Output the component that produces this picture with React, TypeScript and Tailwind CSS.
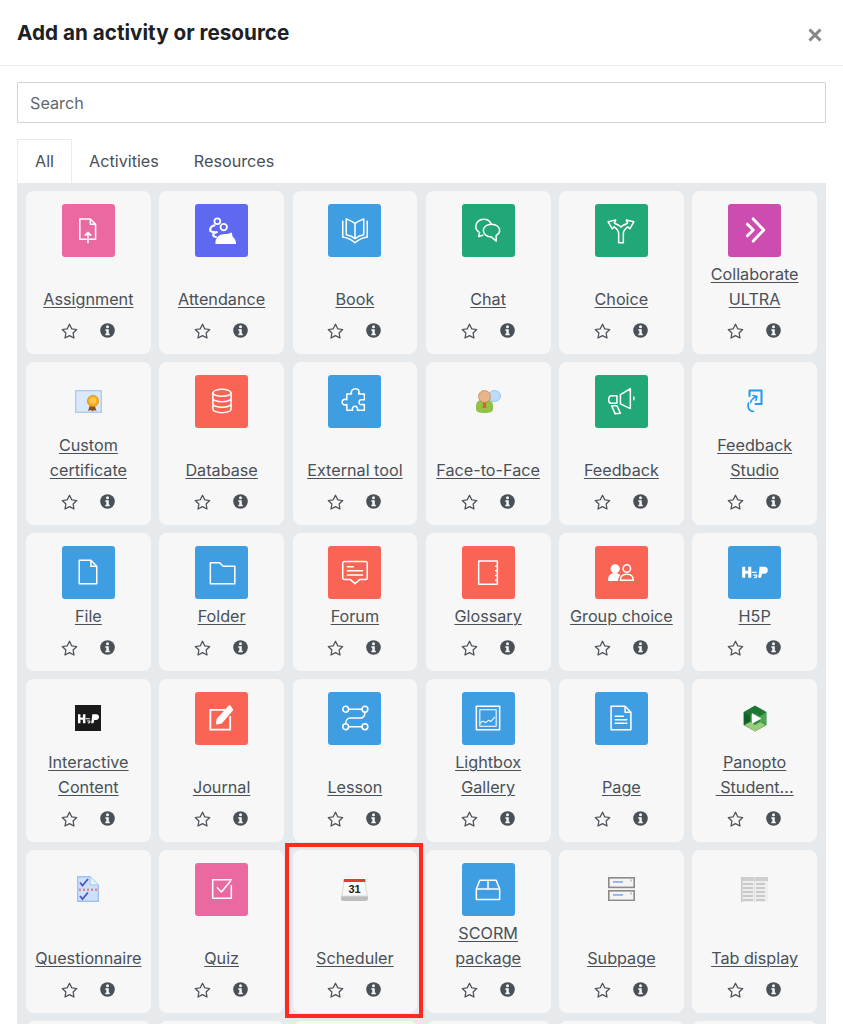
import React from "react";

const W = "#ffffff";
const S = ({ children }: { children: React.ReactNode }) => (
  <svg viewBox="0 0 24 24" width="28" height="28" fill="none" stroke={W} strokeWidth="1.3" strokeLinejoin="round" strokeLinecap="round">{children}</svg>
);

const H5pMark = () => (
  <>
    <path d="M1 7.500h2.600v3.400h2.600V7.500h2.600V17H6.200v-3.600H3.600V17H1z" fill={W} stroke="none" />
    <path d="M16 7.500h4c2 0 3 1.300 3 3s-1.300 3-3 3h-2l-.8 3.500h-2.400z" fill={W} stroke="none" />
    <path d="M9.500 12.300h3.500M11 14.700h2.300c.5.600 0 2-1.500 2" strokeWidth="1.100" />
  </>
);

const glyphs: Record<string, React.ReactNode> = {
  assignment: <S><path d="M5 2.500h9l4.500 4.500v13H13.500M10.500 20H5V2.500M14 2.500V7h4.500" /><path d="M12 23v-9M9.500 16.500L12 14l2.500 2.500" fill={W} /></S>,
  attendance: (
    <S>
      <circle cx="8" cy="4.500" r="2.500" strokeWidth="1.500" />
      <circle cx="13.500" cy="9.500" r="2.800" strokeWidth="1.500" />
      <path d="M5.500 8C3 8.300 1.500 10.300 2 12.800c1.500 1 3.500 1.400 5.500 1M6 14.500c-2.300.5-2.300 3 .8 3.500" strokeWidth="1.800" />
      <path d="M7 23.500c0-4.500 2.800-7.500 7-7.500h1.500c1.800 0 3.200-.5 4.300-1.200l.7 3.200c1.500 1 2.500 3 3 5.500z" fill={W} />
    </S>
  ),
  book: <S><path d="M12 6.500C10 4.500 7 3.500 4.500 2.500V16c3 .5 5.500 1.500 7.500 3.500 2-2 4.500-3 7.500-3.500V2.500C17 3.500 14 4.500 12 6.500zM12 6.500v13" /><path d="M1.500 4.500v13.500c4.500.8 8 2.500 10.500 5 2.500-2.500 6-4.200 10.500-5V4.500" /></S>,
  chat: <S><path d="M7.500 16.500l-3.500 1 .8-3.300C2.800 13 1.500 11.200 1.500 9c0-3.500 3-6.200 6.700-6.200 3 0 5.600 1.700 6.500 4.200" /><path d="M15 7c-4 0-7 2.400-7 5.500s3 5.500 7 5.500l4 3.500v-4.800c1.800-1 3-2.500 3-4.200C22 9.400 19 7 15 7z" /></S>,
  choice: <S><path d="M10 23h4v-8c0-2.500 1.500-4 3.800-5.700l1.700 1.700L23 5l-6.500-1.500 1.200 2.700c-2.500 1-4.700 1.800-5.700 3.300-1-1.500-3.200-2.300-5.700-3.300L7.500 3.500 1 5l3.500 6 1.700-1.700C8.500 11 10 12.500 10 15z" /></S>,
  collab: <S><path d="M10.500 2.500L19.500 12l-9 9.500M5.500 7l5 5-5 5" strokeWidth="2.500" /></S>,
  database: <S><ellipse cx="12" cy="5" rx="7.800" ry="3" /><path d="M4.200 5v14c0 1.700 3.500 3 7.800 3s7.800-1.300 7.800-3V5M4.200 9.700c0 1.700 3.500 3 7.800 3s7.800-1.300 7.800-3M4.200 14.400c0 1.700 3.500 3 7.800 3s7.800-1.300 7.800-3" /></S>,
  puzzle: <S><path d="M9 6H5v5c-3-1.500-4 1-4 2s1 3.500 4 2v5h5c-1-2.500 1-3.500 2-3.500s3 1 2 3.500h6v-5h-2c-1.500.5-2.500-.5-2.500-2s1-2.500 2.500-2h2V6h-5c1.500-3-.5-4.500-2.500-4.500S8 3 9 6z" /></S>,
  megaphone: <S><path d="M11.500 6.500L20 1.500v17l-8.500-4zM23 8.500V11M8.500 7.500H4A2.500 2.500 0 0 0 1.500 10v1.500A2.500 2.500 0 0 0 4 14h4.500zM4 16h4.500l3 6.500-4.500.5z" /></S>,
  file: <S><path d="M4.500 2h10l5 5v15h-15zM14.500 2v5h5" /></S>,
  folder: <S><path d="M2 4h8l3 3h10v15H2z" /></S>,
  forum: <S><path d="M3 3h18a1.500 1.500 0 0 1 1.500 1.500V17a1.500 1.500 0 0 1-1.500 1.500h-5L12 22l-4-3.500H3A1.500 1.500 0 0 1 1.500 17V4.500A1.500 1.500 0 0 1 3 3z" /><path d="M5.500 7.500h5M5.500 11h13M5.500 14.500h13" /></S>,
  glossary: <S><path d="M4 2.500h16v20H4zM20 7h-1.500M20 11h-1.500M20 15h-1.500M20 19h-1.500" /></S>,
  group: <S><circle cx="7" cy="9.300" r="3.300" fill={W} /><path d="M1.500 19c0-3.700 2-5.500 5.500-5.500 1.700 0 2.700.4 3.700 1.300-1.200 1-1.800 2.300-1.800 4.200z" fill={W} /><circle cx="17" cy="9" r="3.200" /><path d="M11.500 19c0-3.300 2-5 5.500-5s5.500 1.700 5.500 5z" /></S>,
  h5p: <S><H5pMark /></S>,
  journal: <S><path d="M19 11v11H2V5h12" strokeWidth="1.600" /><path d="M8 13l-.5 4 4-1L21 5l-2.500-3.500z" fill={W} /></S>,
  lesson: <S><circle cx="4" cy="4.500" r="2.500" /><circle cx="20.500" cy="4.500" r="2.500" /><circle cx="4" cy="19.500" r="2.500" /><circle cx="20.500" cy="19.500" r="2.500" /><path d="M6.500 4.500H18M20.500 7c0 3-1.500 5-4 5H8c-2.500 0-4 2-4 5M6.500 19.500H18" /></S>,
  lightbox: <S><rect x="2" y="2" width="20" height="20" /><rect x="5" y="5" width="14" height="14" strokeWidth=".9" /><path d="M5.500 16.500c1-1.500 2-2 3-1.500l1.500 1 2.500-2 2 1 3-3.500" strokeWidth=".9" /></S>,
  page: <S><path d="M3.500 2h12l5 5v15h-17zM15.500 2v5h5" /><path d="M7 10.500h7M7 13.500h10M7 16.500h10" /></S>,
  quiz: <S><path d="M20 9v11H4V4h16" /><path d="M8 11l3.500 3.500L19 5.500" /></S>,
  scorm: <S><path d="M2 12l3-7.500h14l3 7.500M12 4.500V12M2 12h20v9H2z" /></S>,
};

const Cert = () => (
  <svg width="27" height="23" viewBox="0 0 27 23">
    <rect x=".7" y=".7" width="25.600" height="21.600" fill="#d9e8fa" stroke="#aecbf0" strokeWidth="1.400" />
    <path d="M15 15l-2 6 3-1 2 1.500 1-1.500 2.500 1-2-6z" fill="#8a5024" />
    <circle cx="18" cy="11" r="5.600" fill="#f7ae1d" stroke="#d98d10" strokeWidth=".8" />
    <circle cx="18" cy="10.500" r="3.200" fill="#fbc955" />
  </svg>
);
const F2F = () => (
  <svg width="25" height="24" viewBox="0 0 25 24">
    <ellipse cx="18.500" cy="7" rx="6" ry="5.500" fill="#bcdcf8" stroke="#8dbcec" strokeWidth=".8" />
    <path d="M0 17c0-5 3-6.500 8.500-6.500S17 12 17 17v3c0 3-3 4-8.500 4S0 23 0 20z" fill="#93c247" />
    <path d="M6.500 13h4l-.7 2 .7 4h-4l.7-4z" fill="#d8622a" />
    <circle cx="8.500" cy="7.500" r="6" fill="#e8b58a" stroke="#b98352" strokeWidth=".7" />
  </svg>
);
const H5pBlack = () => (
  <div className="w-[26px] h-[26px] bg-[#1a1a1a] flex items-center justify-center">
    <svg viewBox="0 0 24 24" width="23" height="23" fill="none" stroke={W} strokeLinecap="round">
      <H5pMark />
    </svg>
  </div>
);
const Studio = () => (
  <svg width="16" height="24" viewBox="0 0 16 24" fill="none" stroke="#1e9bf5" strokeWidth="2" strokeLinecap="round" strokeLinejoin="round">
    <path d="M2.500 7V1.500H14.500V15H8.500" />
    <path d="M3.500 13.500C4.500 10.500 6.500 8.500 10 7.500M6 6.500l4 1-1.200 4" strokeWidth="1.500" />
    <path d="M1.500 14c-1 4 0 8 5 8.500" strokeWidth="1.700" />
  </svg>
);
const Panopto = () => (
  <svg width="24" height="27" viewBox="0 0 24 27" strokeLinejoin="round">
    <path d="M12 1.500l10.500 6v12L12 25.500l-10.500-6v-12z" fill="#2c8a3e" stroke="#2c8a3e" strokeWidth="2" />
    <path d="M12 1l10.500 6.500L17 11l-5-3-5 3-6-3.500z" fill="#1f7532" />
    <path d="M1 7.500L7 11v6l-6 3z" fill="#14602a" />
    <path d="M23 7.500V19l-6-2v-6z" fill="#4fa552" />
    <path d="M1.500 20L7 17l5 3 5-3 5.500 3L12 26.500z" fill="#9ccb7c" />
    <path d="M9 8.500L18 13.500 9 18.500z" fill="#ffffff" stroke="#ffffff" strokeWidth=".6" />
  </svg>
);
const Questionnaire = () => (
  <svg width="22" height="26" viewBox="0 0 22 26">
    <path d="M.7.7H13l8.300 8.300v16.300H.7z" fill="#cde2fa" stroke="#9fc2f2" strokeWidth="1.400" />
    <path d="M13 .7V9h8.300" fill="#eaf3fc" stroke="#9fc2f2" />
    <path d="M3 6.500l2.500 3L11 3M3 20l2.500 3L11 16.500" fill="none" stroke="#4d55c8" strokeWidth="1.800" />
    <path d="M3 12.500v2.500M7 12.500v2.500M11 12.500v2.500M15 12.500v2.500M19 12.500v2.500" stroke="#e8616b" strokeWidth="1.400" />
  </svg>
);
const Calendar = () => (
  <svg width="27" height="23" viewBox="0 0 27 23">
    <path d="M0 19L3 1h21l3 18z" fill="#dcdcdc" />
    <path d="M0 18.500h27v2.500c0 1-1 2-3 2H3c-2 0-3-1-3-2z" fill="#bdbdbd" />
    <path d="M3 1h21l.5 3H2.500z" fill="#e53935" />
    <path d="M3.500 4h20l2 13.500h-24z" fill="#fafafa" />
    <text x="13.500" y="14.800" textAnchor="middle" fontSize="11" fontWeight="700" fill="#222" fontFamily="Liberation Sans, sans-serif">31</text>
  </svg>
);
const Subpage = () => (
  <svg width="27" height="24" viewBox="0 0 27 24">
    {[0, 13].map((y) => (
      <g key={y}>
        <rect x=".8" y={y + 0.8} width="25.400" height="9.600" fill="#f4f4f4" stroke="#8a8a86" strokeWidth="1.600" />
        <rect x="5" y={y + 4} width="10" height="1.800" fill="#8fb1f2" />
        <rect x="22" y={y + 2.500} width="2" height="2" fill="#c4c4c4" />
      </g>
    ))}
  </svg>
);
const TabDisplay = () => (
  <svg width="27" height="26" viewBox="0 0 27 26">
    <rect x="0" y="1" width="27" height="25" fill="#eeeeee" />
    <rect x="0" y="1" width="27" height="4" fill="#cfcfcf" />
    <path d="M2 8h10M15 8h9M2 12h10M15 12h9M2 16h10M15 16h9M2 20h10M15 20h9M2 24h10M15 24h9" stroke="#bdbdbd" strokeWidth="1.500" />
    <path d="M13.500 1v25" stroke="#e0e0e0" />
    <rect x="0" y="1" width="1.500" height="25" fill="#c6c6c6" />
  </svg>
);

const Star = () => (
  <svg width="17" height="16" viewBox="0 0 17 16" fill="none" stroke="#495057" strokeWidth="1.250" strokeLinejoin="round">
    <path d="M8.500 1.200l2.200 4.600 5 .7-3.600 3.500.9 5-4.500-2.400L4 15l.9-5L1.300 6.500l5-.7z" />
  </svg>
);
const Info = () => (
  <svg width="15" height="15" viewBox="0 0 15 15">
    <circle cx="7.500" cy="7.500" r="7.300" fill="#495057" />
    <circle cx="7.500" cy="3.700" r="1.500" fill="#f7f7f7" />
    <path d="M5.300 6.200h3.500v4.600h1v1.500H5.300v-1.500h1V7.700h-1z" fill="#f7f7f7" />
  </svg>
);

type Item = { label: string; lines?: string[]; color?: string; glyph?: string; raw?: React.ReactNode };
const rows: Item[][] = [
  [
    { label: "Assignment", color: "bg-[#ea69a1]", glyph: "assignment" },
    { label: "Attendance", color: "bg-[#5f68f0]", glyph: "attendance" },
    { label: "Book", color: "bg-[#3f9ee2]", glyph: "book" },
    { label: "Chat", color: "bg-[#22a877]", glyph: "chat" },
    { label: "Choice", color: "bg-[#22a877]", glyph: "choice" },
    { label: "Collaborate ULTRA", lines: ["Collaborate", "ULTRA"], color: "bg-[#cc4cb0]", glyph: "collab" },
  ],
  [
    { label: "Custom certificate", lines: ["Custom", "certificate"], raw: <Cert /> },
    { label: "Database", color: "bg-[#f96454]", glyph: "database" },
    { label: "External tool", color: "bg-[#3f9ee2]", glyph: "puzzle" },
    { label: "Face-to-Face", raw: <F2F /> },
    { label: "Feedback", color: "bg-[#22a877]", glyph: "megaphone" },
    { label: "Feedback Studio", lines: ["Feedback", "Studio"], raw: <Studio /> },
  ],
  [
    { label: "File", color: "bg-[#3f9ee2]", glyph: "file" },
    { label: "Folder", color: "bg-[#3f9ee2]", glyph: "folder" },
    { label: "Forum", color: "bg-[#f96454]", glyph: "forum" },
    { label: "Glossary", color: "bg-[#f96454]", glyph: "glossary" },
    { label: "Group choice", color: "bg-[#f96454]", glyph: "group" },
    { label: "H5P", color: "bg-[#3f9ee2]", glyph: "h5p" },
  ],
  [
    { label: "Interactive Content", lines: ["Interactive", "Content"], raw: <H5pBlack /> },
    { label: "Journal", color: "bg-[#f96454]", glyph: "journal" },
    { label: "Lesson", color: "bg-[#3f9ee2]", glyph: "lesson" },
    { label: "Lightbox Gallery", lines: ["Lightbox", "Gallery"], color: "bg-[#3f9ee2]", glyph: "lightbox" },
    { label: "Page", color: "bg-[#3f9ee2]", glyph: "page" },
    { label: "Panopto Student...", lines: ["Panopto", "\u00a0Student..."], raw: <Panopto /> },
  ],
  [
    { label: "Questionnaire", raw: <Questionnaire /> },
    { label: "Quiz", color: "bg-[#ea69a1]", glyph: "quiz" },
    { label: "Scheduler", raw: <Calendar /> },
    { label: "SCORM package", lines: ["SCORM", "package"], color: "bg-[#3f9ee2]", glyph: "scorm" },
    { label: "Subpage", raw: <Subpage /> },
    { label: "Tab display", raw: <TabDisplay /> },
  ],
];

function Card({ item }: { item: Item }) {
  const lines = item.lines ?? [item.label];
  return (
    <div className="flex flex-col items-center rounded-[8px] bg-[#f7f7f7] pt-[12.67px]">
      {item.color ? (
        <div className={`w-[53px] h-[53px] rounded-[3px] flex items-center justify-center ${item.color}`}>
          {glyphs[item.glyph!]}
        </div>
      ) : (
        <div className="w-[53px] h-[53px] flex items-center justify-center">{item.raw}</div>
      )}
      <div className="mt-[5px] flex-1 flex flex-col justify-end items-center text-[16.2px] leading-[25px] text-[#495057] underline underline-offset-[2px] decoration-[1px] whitespace-pre">
        {lines.map((l) => (
          <span key={l}>{l}</span>
        ))}
      </div>
      <div className="h-[42px] w-full flex items-center justify-center gap-[22px] pb-[4px] pr-[1px]">
        <Star />
        <Info />
      </div>
    </div>
  );
}

export default function App() {
  return (
    <div className="relative h-[1024px] w-[843px] overflow-hidden bg-white font-['Inter',sans-serif]">
      <header className="h-[66px] flex items-center justify-between pl-[17px] pr-[21px] pt-[1px] border-b border-[#e9ecef]">
        <h1 className="text-[20.7px] font-bold text-[#1d2125]">Add an activity or resource</h1>
        <svg width="14" height="14" viewBox="0 0 14 14" className="mt-[3px]" stroke="#868686" strokeWidth="3">
          <path d="M1.500 1.500l11 11M12.500 1.500l-11 11" />
        </svg>
      </header>
      <div className="px-[17px] pt-[16px]">
        <input
          placeholder="Search"
          className="block w-full h-[41px] border border-[#ced4da] rounded-[1px] px-[12px] text-[16.2px] text-[#495057] placeholder:text-[#5f676e] outline-none"
        />
        <nav className="mt-[16px] flex h-[44px] text-[16.2px] text-[#495057]">
          <div className="w-[55px] flex items-center justify-center border border-b-0 border-[#e9ecef] bg-white">All</div>
          <div className="pl-[17px] flex items-center">Activities</div>
          <div className="pl-[35px] flex items-center">Resources</div>
        </nav>
        <div className="bg-[#e7eaed] px-[9px] pt-[8px] grid grid-cols-6 gap-x-[8.5px] gap-y-[8.33px]">
          {rows.flat().map((item) => (
            <Card key={item.label} item={item} />
          ))}
          {[0, 1, 2, 3, 4, 5].map((n) => (
            <div key={n} className="h-[60px] rounded-[8px] bg-[#f7f7f7]" />
          ))}
        </div>
      </div>
      <div className="absolute left-[284.5px] top-[843px] w-[138.5px] h-[174.5px] border-[4px] border-[#ff2a1f]" />
    </div>
  );
}
